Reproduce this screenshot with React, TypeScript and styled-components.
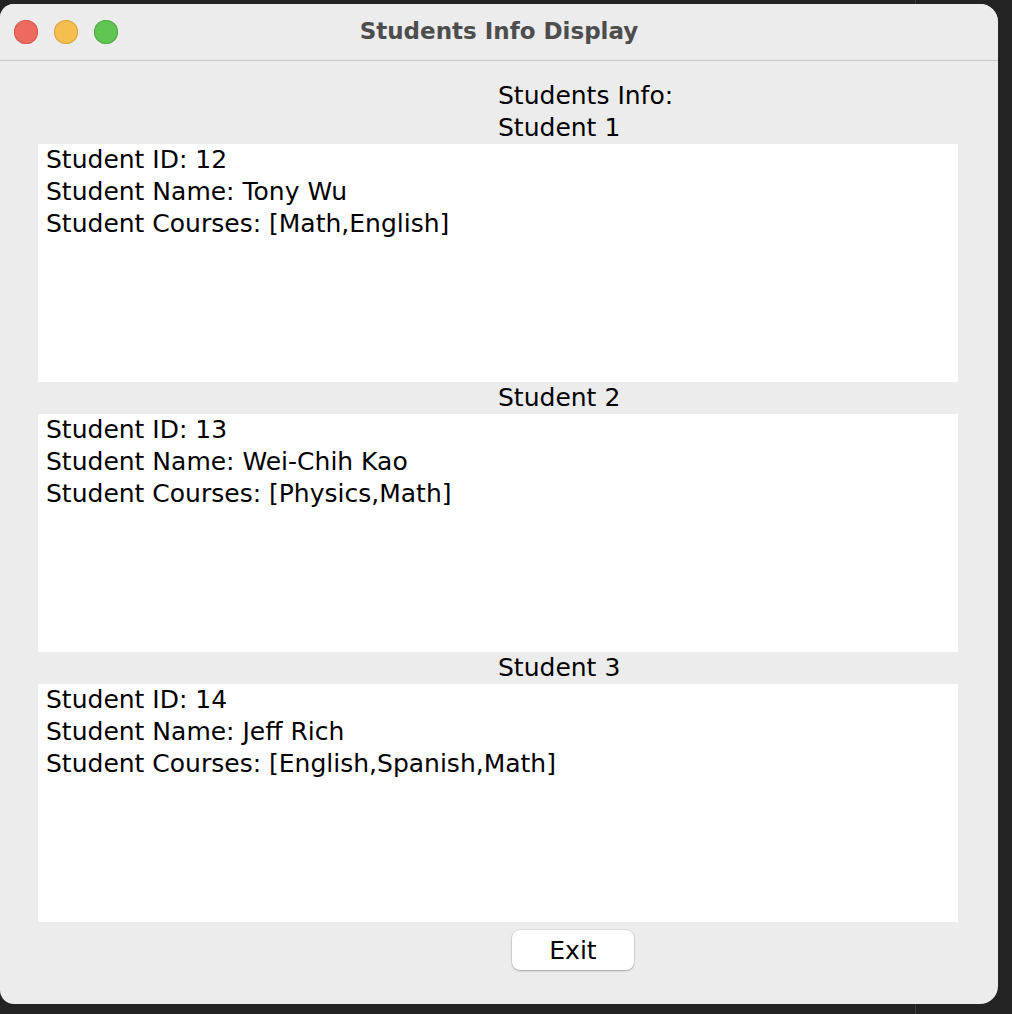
import React from 'react';
import styled, { createGlobalStyle } from 'styled-components';

const GlobalStyle = createGlobalStyle`
  html, body {
    margin: 0;
    padding: 0;
    height: 100%;
  }
  body {
    font-family: "DejaVu Sans", "Liberation Sans", sans-serif;
    background:
      linear-gradient(to right, transparent 915px, #3c3c3c 915px, #3c3c3c 916px, transparent 916px),
      #232323;
  }
`;

const Stage = styled.div`
  padding-top: 4px;
  width: 998px;
`;

const Window = styled.div`
  height: 1000px;
  background: #ececec;
  border-radius: 14px 18px 18px 14px;
  display: flex;
  flex-direction: column;
  overflow: hidden;
`;

const TitleBar = styled.div`
  height: 56px;
  flex-shrink: 0;
  border-bottom: 1px solid #c9c9c9;
  display: flex;
  align-items: center;
  position: relative;
  background: #ececec;
`;

const Lights = styled.div`
  display: flex;
  gap: 16px;
  padding-left: 14px;
`;

const Light = styled.span<{ $color: string; $edge: string }>`
  width: 24px;
  height: 24px;
  border-radius: 50%;
  background: ${p => p.$color};
  box-shadow: inset 0 0 0 1px ${p => p.$edge};
`;

const Title = styled.div`
  position: absolute;
  left: 0;
  right: 0;
  top: 14px;
  text-align: center;
  font-size: 23px;
  font-weight: 700;
  color: #4d4d4d;
  pointer-events: none;
`;

const Content = styled.div`
  flex: 1;
  display: flex;
  flex-direction: column;
  padding: 19px 40px 0 38px;
`;

const Label = styled.div`
  padding-left: 460px;
  font-size: 25px;
  line-height: 32px;
  color: #000;
`;

const InfoArea = styled.div`
  height: 238px;
  background: #fff;
  padding-left: 8px;
  font-size: 25px;
  line-height: 32px;
  color: #000;
`;

const ButtonRow = styled.div`
  display: flex;
  padding: 8px 0 0 474px;
`;

const ExitButton = styled.button`
  width: 122px;
  height: 40px;
  padding: 0;
  border: none;
  border-radius: 8px;
  background: #fff;
  box-shadow: 0 0 0 0.5px rgba(0, 0, 0, 0.12), 0 1px 2px rgba(0, 0, 0, 0.25);
  font-family: inherit;
  font-size: 25px;
  color: #000;
  cursor: pointer;
`;

const students = [
  { id: 12, name: 'Tony Wu', courses: ['Math', 'English'] },
  { id: 13, name: 'Wei-Chih Kao', courses: ['Physics', 'Math'] },
  { id: 14, name: 'Jeff Rich', courses: ['English', 'Spanish', 'Math'] },
];

export default function App() {
  return (
    <>
      <GlobalStyle />
      <Stage>
        <Window>
          <TitleBar>
            <Lights>
              <Light $color="#ee6a5f" $edge="#d5574d" />
              <Light $color="#f5bf4f" $edge="#d9a43b" />
              <Light $color="#61c554" $edge="#4fa943" />
            </Lights>
            <Title>Students Info Display</Title>
          </TitleBar>
          <Content>
            <Label>Students Info:</Label>
            {students.map((s, i) => (
              <React.Fragment key={s.id}>
                <Label>Student {i + 1}</Label>
                <InfoArea>
                  <div>Student ID: {s.id}</div>
                  <div>Student Name: {s.name}</div>
                  <div>Student Courses: [{s.courses.join(',')}]</div>
                </InfoArea>
              </React.Fragment>
            ))}
            <ButtonRow>
              <ExitButton>Exit</ExitButton>
            </ButtonRow>
          </Content>
        </Window>
      </Stage>
    </>
  );
}
